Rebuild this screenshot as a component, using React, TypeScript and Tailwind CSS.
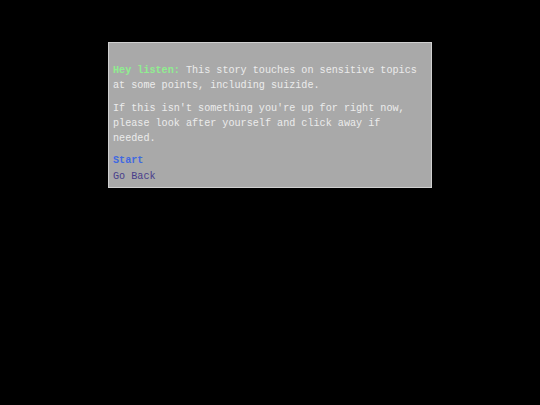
export default function App() {
  return (
    <div className="min-h-screen w-full bg-black pt-[42px] font-['Liberation_Mono',monospace] text-[10.15px] leading-[15.3px]">
      <div className="mx-auto w-[324px] border border-[#d0d0d0] bg-[#a9a9a9] px-1 pt-[20px] pb-[3px] text-[#ececec]">
        <p>
          <span className="font-bold text-[#90ee90]">Hey listen:</span> This story touches on sensitive topics at some
          points, including suizide.
        </p>
        <p className="mt-[7px]">
          If this isn't something you're up for right now, please look after yourself and click away if needed.
        </p>
        <div className="mt-[7px] flex flex-col">
          <a href="#" className="font-bold text-[#4169e1]">
            Start
          </a>
          <a href="#" className="text-[#483d8b]">
            Go Back
          </a>
        </div>
      </div>
    </div>
  )
}
